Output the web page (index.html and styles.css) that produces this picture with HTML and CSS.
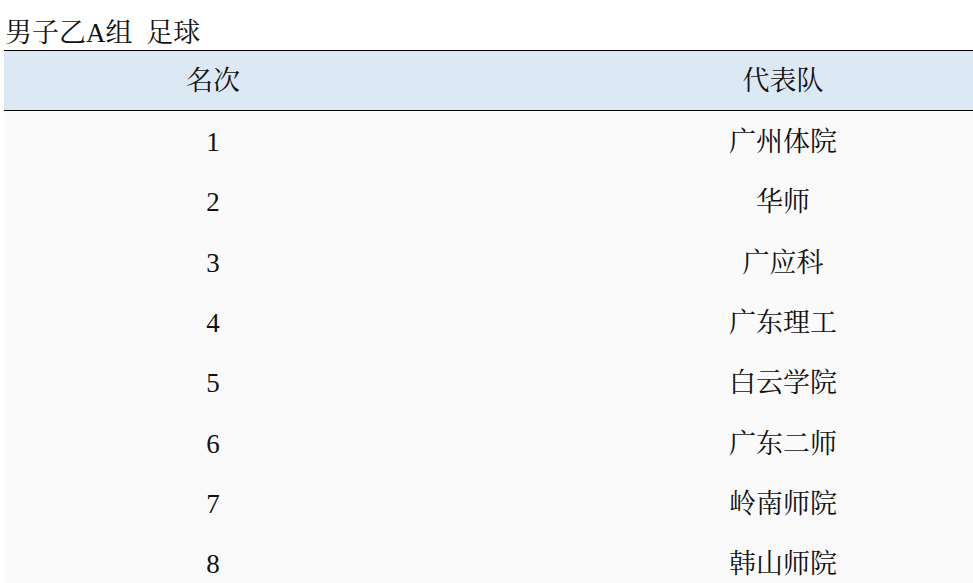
FILE: index.html
```html
<!DOCTYPE html>
<html lang="zh-CN">
<head>
<meta charset="utf-8">
<title>男子乙A组 足球</title>
<link rel="stylesheet" href="styles.css">
</head>
<body>
<div class="page">
  <div class="title">男子乙A组 足球</div>
  <div class="clip">
    <table class="rank">
      <colgroup><col class="c1"><col class="c2"></colgroup>
      <thead>
        <tr><th>名次</th><th>代表队</th></tr>
      </thead>
      <tbody>
        <tr><td>1</td><td>广州体院</td></tr>
        <tr><td>2</td><td>华师</td></tr>
        <tr><td>3</td><td>广应科</td></tr>
        <tr><td>4</td><td>广东理工</td></tr>
        <tr><td>5</td><td>白云学院</td></tr>
        <tr><td>6</td><td>广东二师</td></tr>
        <tr><td>7</td><td>岭南师院</td></tr>
        <tr><td>8</td><td>韩山师院</td></tr>
      </tbody>
    </table>
  </div>
</div>
</body>
</html>
```
FILE: styles.css
```css
html, body {
  margin: 0;
  padding: 0;
  background: #ffffff;
}
body {
  font-family: "Liberation Serif", "Noto Serif CJK SC", "Noto Sans CJK SC", serif;
  color: #111;
  overflow: hidden;
}
.page {
  padding: 0 0 0 4px;
  width: 969px;
  overflow: hidden;
}
.title {
  font-size: 27px;
  line-height: 28px;
  margin: 19px 0 3px 1px;
  white-space: pre;
  word-spacing: 7px;
}
.clip {
  width: 969px;
  overflow: hidden;
}
.rank {
  border-collapse: collapse;
  width: 1140px;
  table-layout: fixed;
  font-size: 27px;
}
.c1 { width: 418px; }
.c2 { width: 722px; }
.rank th {
  font-weight: normal;
  background: #dde8f5;
  border-top: 1px solid #000;
  border-bottom: 1px solid #000;
  height: 59px;
  padding: 0;
  text-align: center;
  vertical-align: middle;
  line-height: 28px;
}
.rank td {
  background: #fafafa;
  height: 58.3px;
  padding: 2px 0 0;
  text-align: center;
  vertical-align: middle;
  line-height: 28px;
}
```
